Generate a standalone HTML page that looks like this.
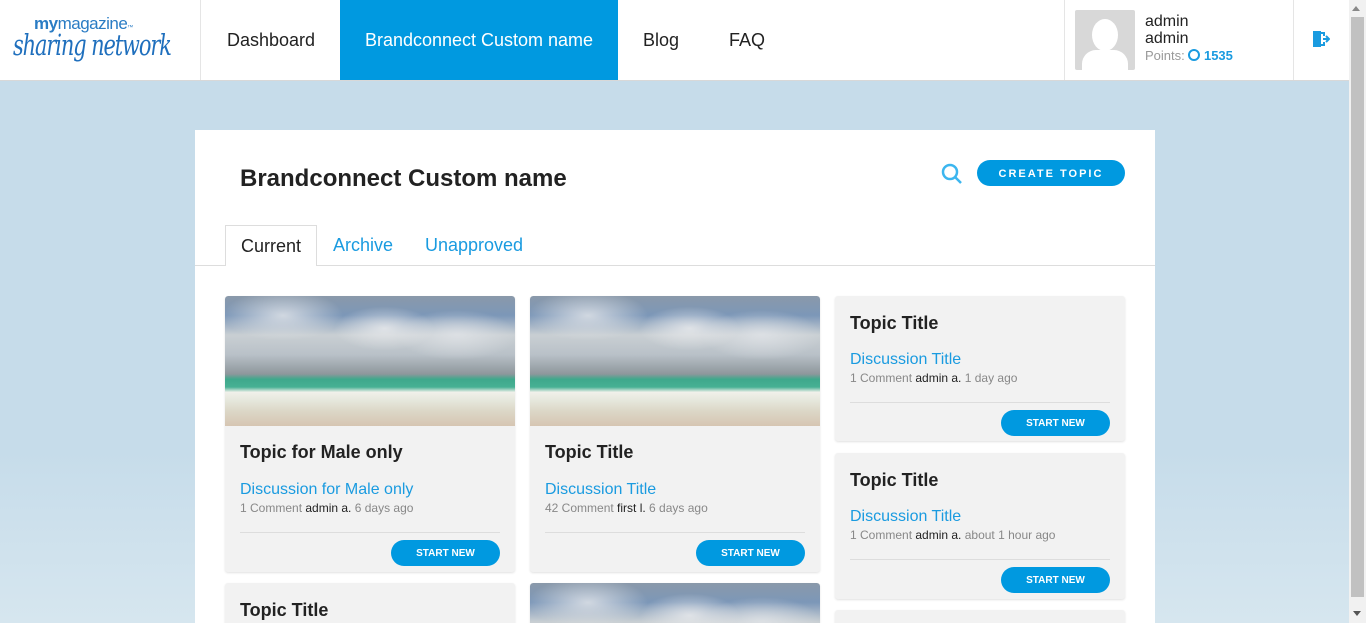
<!DOCTYPE html>
<html style="width:1366px;height:623px;overflow:hidden"><head><style>
*{box-sizing:border-box;margin:0;padding:0}
body{width:1366px;height:623px;overflow:hidden;font-family:"Liberation Sans",sans-serif;background:linear-gradient(#c6dcea 0,#c6dcea 450px,#d6e6ef 623px);position:relative}
.hdr{position:absolute;left:0;top:0;width:1349px;height:81px;background:#fff;border-bottom:1px solid #d8d8d8}
.logo{position:absolute;left:0;top:0;width:201px;height:80px;border-right:1px solid #e5e5e5;overflow:hidden;white-space:nowrap}
.nav{position:absolute;top:0;height:80px;line-height:80px;font-size:18px;color:#222;text-align:center}
.user{position:absolute;left:1064px;top:0;width:230px;height:80px;border-left:1px solid #e5e5e5;border-right:1px solid #e5e5e5}
.sb{position:absolute;left:1349px;top:0;width:17px;height:623px;background:#f1f1f1}
.panel{position:absolute;left:195px;top:130px;width:960px;height:493px;background:#fff}
.card{position:absolute;width:290px;background:#f2f2f2;border-radius:3px;box-shadow:0 1px 2px rgba(0,0,0,.12);overflow:hidden}
.img{height:130px;border-radius:3px 3px 0 0;background:
radial-gradient(ellipse 60px 25px at 20% 15%,rgba(230,232,235,.8),transparent),
radial-gradient(ellipse 50px 22px at 55% 25%,rgba(235,236,238,.8),transparent),
radial-gradient(ellipse 60px 25px at 80% 30%,rgba(225,228,232,.8),transparent),
linear-gradient(180deg,#8a99aa 0,#7c97b8 15%,#c9cfd3 30%,#b9c1c8 45%,#8e979c 60%,#3fa88c 64%,#46b093 70%,#f0f0ea 74%,#e6e8dd 80%,#dcd8c8 88%,#d6c5b2 100%)}
.tt{font-weight:bold;font-size:18px;color:#222;position:absolute;left:15px}
.dt{position:absolute;left:15px;font-size:16px;color:#1a9be0}
.mt{position:absolute;left:15px;font-size:12px;color:#888}
.mt b{font-weight:normal;color:#222}
.hr{position:absolute;left:15px;right:15px;height:1px;background:#ddd}
.btn{position:absolute;right:15px;width:109px;height:26px;border-radius:13px;background:#0099e0;color:#fff;font-size:10px;font-weight:bold;text-align:center;line-height:28px}
</style></head><body>
<div class="hdr">
<div class="logo">
<div style="position:absolute;left:34px;top:14px;font-size:17px;color:#2a7cc4;letter-spacing:-0.5px"><b>my</b>magazine<span style="font-size:6px">™</span></div>
<div style="position:absolute;left:13px;top:28px;font-size:29px;color:#1f6fbd;font-family:'DejaVu Serif',serif;font-style:italic;letter-spacing:-1.5px;transform:scaleX(.72);transform-origin:left">sharing network</div>
</div>
<div class="nav" style="left:202px;width:138px">Dashboard</div>
<div class="nav" style="left:340px;width:278px;background:#0099e0;color:#fff">Brandconnect Custom name</div>
<div class="nav" style="left:618px;width:86px">Blog</div>
<div class="nav" style="left:704px;width:86px">FAQ</div>
<div class="user">
<div style="position:absolute;left:10px;top:10px;width:60px;height:60px;background:#d8d8d8;border-radius:2px;overflow:hidden">
<div style="position:absolute;left:17px;top:9px;width:26px;height:32px;border-radius:50%;background:#fff"></div>
<div style="position:absolute;left:7px;top:40px;width:46px;height:30px;border-radius:14px 14px 0 0;background:#fff"></div></div>
<div style="position:absolute;left:80px;top:13px;font-size:16px;line-height:17px;color:#222">admin<br>admin</div>
<div style="position:absolute;left:80px;top:48px;font-size:13px;color:#999">Points: <span style="color:#1a9be0;font-weight:bold"><span style="display:inline-block;width:12px;height:12px;border:2px solid #1a9be0;border-radius:50%;vertical-align:-1px"></span> 1535</span></div>
</div>
<svg style="position:absolute;left:1312px;top:30px" width="18" height="18" viewBox="0 0 18 18"><path d="M1 1h8v16H1z" fill="#1a9be0"/><path d="M9 3h3v3M12 12v3H9" stroke="#1a9be0" stroke-width="2" fill="none"/><path d="M11 9h6M14 6l3 3-3 3" stroke="#1a9be0" stroke-width="2" fill="none"/></svg>
</div>
<div class="sb"><div style="position:absolute;left:3px;top:6px;border:4px solid transparent;border-bottom:5px solid #888;border-top:0"></div><div style="position:absolute;left:2px;top:17px;width:13px;height:580px;background:#c1c1c1"></div><div style="position:absolute;left:4px;top:611px;border:4px solid transparent;border-top:5px solid #555;border-bottom:0"></div></div>
<div class="panel">
<div style="position:absolute;left:45px;top:35px;font-size:24px;font-weight:bold;color:#222">Brandconnect Custom name</div>
<svg style="position:absolute;left:746px;top:33px" width="22" height="22" viewBox="0 0 22 22"><circle cx="9" cy="9" r="7" stroke="#3cb6ef" stroke-width="2.5" fill="none"/><path d="M14 14l6 6" stroke="#3cb6ef" stroke-width="2.5"/></svg>
<div style="position:absolute;left:782px;top:30px;width:148px;height:26px;border-radius:13px;background:#0099e0;color:#fff;font-size:11px;font-weight:bold;letter-spacing:2px;text-align:center;line-height:28px">CREATE TOPIC</div>
<div style="position:absolute;left:0;top:135px;width:960px;height:1px;background:#ddd"></div>
<div style="position:absolute;left:30px;top:95px;width:92px;height:41px;background:#fff;border:1px solid #ddd;border-bottom:none;font-size:18px;color:#222;text-align:center;line-height:40px">Current</div>
<div style="position:absolute;left:138px;top:105px;font-size:18px;color:#1a9be0">Archive</div>
<div style="position:absolute;left:230px;top:105px;font-size:18px;color:#1a9be0">Unapproved</div>
</div>
<div class="card" style="left:225px;top:296px;height:276px"><div class="img"></div>
<div class="tt" style="top:146px">Topic for Male only</div><div class="dt" style="top:185px">Discussion for Male only</div><div class="mt" style="top:205px">1 Comment <b>admin a.</b> 6 days ago</div><div class="hr" style="top:236px"></div><div class="btn" style="top:244px">START NEW</div></div>
<div class="card" style="left:530px;top:296px;height:276px"><div class="img"></div>
<div class="tt" style="top:146px">Topic Title</div><div class="dt" style="top:185px">Discussion Title</div><div class="mt" style="top:205px">42 Comment <b>first l.</b> 6 days ago</div><div class="hr" style="top:236px"></div><div class="btn" style="top:244px">START NEW</div></div>
<div class="card" style="left:835px;top:296px;height:145px">
<div class="tt" style="top:17px">Topic Title</div><div class="dt" style="top:55px">Discussion Title</div><div class="mt" style="top:75px">1 Comment <b>admin a.</b> 1 day ago</div><div class="hr" style="top:106px"></div><div class="btn" style="top:114px">START NEW</div></div>
<div class="card" style="left:835px;top:453px;height:146px">
<div class="tt" style="top:17px">Topic Title</div><div class="dt" style="top:55px">Discussion Title</div><div class="mt" style="top:75px">1 Comment <b>admin a.</b> about 1 hour ago</div><div class="hr" style="top:106px"></div><div class="btn" style="top:114px">START NEW</div></div>
<div class="card" style="left:225px;top:583px;height:40px;border-radius:3px 3px 0 0"><div class="tt" style="top:17px">Topic Title</div></div>
<div class="card" style="left:530px;top:583px;height:40px;border-radius:3px 3px 0 0"><div class="img"></div></div>
<div class="card" style="left:835px;top:610px;height:13px;border-radius:3px 3px 0 0"></div>
</body></html>
